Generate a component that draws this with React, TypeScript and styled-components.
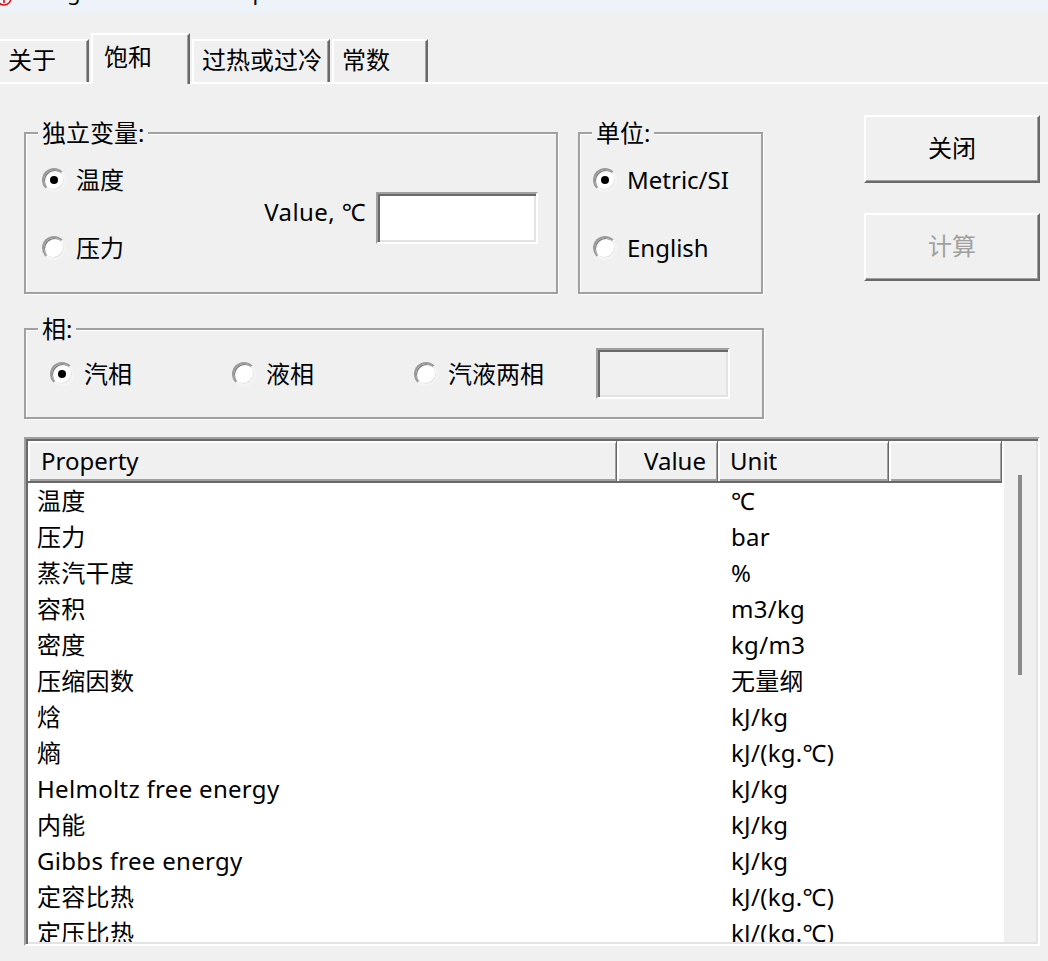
import React from "react";
import styled, { createGlobalStyle } from "styled-components";

const Global = createGlobalStyle`
  html, body { margin: 0; padding: 0; background: #f0f0f0; }
  body {
    font-family: "Noto Sans", "Noto Sans CJK SC", sans-serif;
    font-size: 24px;
    color: #000;
  }
  * { box-sizing: border-box; }
`;

const Window = styled.div`
  width: 1048px;
  height: 961px;
  overflow: hidden;
  background: #f0f0f0;
  display: flex;
  flex-direction: column;
`;

const TitleBar = styled.div`
  height: 14px;
  flex: none;
  background: #eef2f9;
  overflow: hidden;
  display: flex;
  align-items: flex-start;
  gap: 8px;
`;

const TitleIcon = styled.svg`
  flex: none;
  margin-top: -11px;
  margin-left: -5px;
`;

const TitleText = styled.span`
  font-size: 22px;
  line-height: 22px;
  margin-top: -20px;
  white-space: nowrap;
`;

const TabStrip = styled.div`
  height: 70px;
  flex: none;
  display: flex;
  align-items: flex-end;
  gap: 2px;
  margin-left: -2px;
  border-bottom: 2px solid #fff;
`;

const Tab = styled.div<{ $w: number; $active?: boolean }>`
  width: ${(p) => p.$w}px;
  height: ${(p) => (p.$active ? 51 : 43)}px;
  margin-bottom: ${(p) => (p.$active ? -2 : 0)}px;
  padding-left: ${(p) => (p.$active ? 11 : 8)}px;
  padding-bottom: ${(p) => (p.$active ? 5 : 3)}px;
  display: flex;
  align-items: center;
  background: #f0f0f0;
  border-top: 2px solid #fff;
  border-left: 2px solid #fff;
  border-right: 2px solid #696969;
  box-shadow: inset -1px 0 0 #a0a0a0;
  white-space: nowrap;
  line-height: 1;
`;

const Panel = styled.div`
  flex: 1;
  padding: 31px 0 0 24px;
  display: flex;
  flex-direction: column;
`;

const TopRow = styled.div`
  display: flex;
  align-items: flex-start;
`;

const GroupsRow = styled.div`
  margin-top: 17px;
  display: flex;
  gap: 20px;
`;

const GroupBox = styled.div<{ $w: number; $h: number; $pl: number }>`
  position: relative;
  width: ${(p) => p.$w}px;
  height: ${(p) => p.$h}px;
  border: 2px solid #a0a0a0;
  box-shadow: inset 1px 1px 0 #fff, 1px 1px 0 #fff;
  padding-left: ${(p) => p.$pl}px;
  display: flex;
  align-items: center;
`;

const Legend = styled.span`
  position: absolute;
  top: -15px;
  left: 12px;
  padding: 0 4px;
  line-height: 28px;
  background: #f0f0f0;
  white-space: nowrap;
`;

const IndependentBody = styled.div`
  flex: 1;
  display: flex;
  align-items: center;
  justify-content: space-between;
  padding-right: 18px;
`;

const RadioColumn = styled.div`
  display: flex;
  flex-direction: column;
  gap: 36px;
  margin-top: 2px;
`;

const RadioItem = styled.label`
  display: flex;
  align-items: center;
  gap: 10px;
  height: 32px;
  line-height: 32px;
  white-space: nowrap;
  cursor: default;
`;

const RadioCircle = styled.span<{ $on?: boolean }>`
  width: 24px;
  height: 24px;
  flex: none;
  border-radius: 50%;
  background: #fff;
  border: 2px solid;
  border-color: #9a9a9a #f4f4f4 #f4f4f4 #9a9a9a;
  box-shadow: inset 1px 1px 0 #7a7a7a, inset -1px -1px 0 #e3e3e3;
  display: flex;
  align-items: center;
  justify-content: center;
  &::after {
    content: "";
    width: 8px;
    height: 8px;
    border-radius: 50%;
    background: ${(p) => (p.$on ? "#000" : "transparent")};
  }
`;

const ValueRow = styled.div`
  display: flex;
  align-items: center;
  gap: 10px;
  margin-top: 9px;
`;

const ValueLabel = styled.span`
  margin-bottom: 12px;
  white-space: nowrap;
  letter-spacing: 0.4px;
`;

const SunkenInput = styled.div<{ $w: number; $h: number; $bg: string }>`
  width: ${(p) => p.$w}px;
  height: ${(p) => p.$h}px;
  background: ${(p) => p.$bg};
  border: 2px solid;
  border-color: #a0a0a0 #fff #fff #a0a0a0;
  box-shadow: inset 2px 2px 0 #696969, inset -2px -2px 0 #e3e3e3;
`;

const ButtonColumn = styled.div`
  margin-left: 101px;
  display: flex;
  flex-direction: column;
  gap: 30px;
`;

const Button = styled.button<{ $disabled?: boolean }>`
  width: 176px;
  height: 68px;
  padding: 0 0 6px;
  font: inherit;
  color: ${(p) => (p.$disabled ? "#a0a0a0" : "#000")};
  background: #f0f0f0;
  border: 2px solid;
  border-color: #fff #696969 #696969 #fff;
  box-shadow: inset -1px -1px 0 #a0a0a0;
  display: flex;
  align-items: center;
  justify-content: center;
`;

const PhaseBox = styled(GroupBox)`
  margin-top: 34px;
`;

const PhaseGrid = styled.div`
  display: grid;
  grid-template-columns: 182px 182px 182px auto;
  align-items: center;
`;

const Table = styled.div`
  margin-top: 18px;
  width: 1016px;
  height: 509px;
  flex: none;
  border: 2px solid;
  border-color: #a0a0a0 #fff #fff #a0a0a0;
  box-shadow: inset 2px 2px 0 #696969, inset -2px -2px 0 #e3e3e3;
  padding: 2px;
  display: flex;
`;

const ListArea = styled.div`
  flex: 1;
  background: #fff;
  overflow: hidden;
  display: flex;
  flex-direction: column;
`;

const HeaderRow = styled.div`
  flex: none;
  height: 42px;
  display: grid;
  grid-template-columns: 589px 101px 171px 113px;
`;

const HeaderCell = styled.div<{ $right?: boolean; $pl: number }>`
  background: #f0f0f0;
  border-right: 1px solid #696969;
  border-bottom: 2px solid #696969;
  box-shadow: inset 2px 2px 0 #fff, inset -1px -2px 0 #a0a0a0;
  padding: 0 ${(p) => (p.$right ? 11 : 0)}px 0 ${(p) => p.$pl}px;
  display: flex;
  align-items: center;
  justify-content: ${(p) => (p.$right ? "flex-end" : "flex-start")};
  white-space: nowrap;
  line-height: 1;
`;

const DataRow = styled.div`
  flex: none;
  height: 36px;
  display: grid;
  grid-template-columns: 589px 101px 1fr;
  align-items: center;
  white-space: nowrap;
`;

const DataCell = styled.span<{ $pl: number }>`
  padding-left: ${(p) => p.$pl}px;
  line-height: 36px;
  letter-spacing: 0.3px;
`;

const ScrollTrack = styled.div`
  width: 32px;
  flex: none;
  background: #f0f0f0;
  padding: 34px 0 0 14px;
`;

const ScrollThumb = styled.div`
  width: 4px;
  height: 200px;
  background: #8a8a8a;
`;

const rows: [string, string][] = [
  ["温度", "℃"],
  ["压力", "bar"],
  ["蒸汽干度", "%"],
  ["容积", "m3/kg"],
  ["密度", "kg/m3"],
  ["压缩因数", "无量纲"],
  ["焓", "kJ/kg"],
  ["熵", "kJ/(kg.℃)"],
  ["Helmoltz free energy", "kJ/kg"],
  ["内能", "kJ/kg"],
  ["Gibbs free energy", "kJ/kg"],
  ["定容比热", "kJ/(kg.℃)"],
  ["定压比热", "kJ/(kg.℃)"],
];

const Radio: React.FC<{ on?: boolean; label: string }> = ({ on, label }) => (
  <RadioItem>
    <RadioCircle $on={on} />
    <span>{label}</span>
  </RadioItem>
);

export default function App() {
  return (
    <>
      <Global />
      <Window>
        <TitleBar>
          <TitleIcon width="18" height="18" viewBox="0 0 18 18">
            <circle cx="9" cy="9" r="7" fill="none" stroke="#e01010" strokeWidth="1.6" />
            <rect x="8.2" y="10" width="1.6" height="4" fill="#e01010" />
          </TitleIcon>
          <TitleText>Using Steam Table Properties</TitleText>
        </TitleBar>
        <TabStrip>
          <Tab $w={91}>关于</Tab>
          <Tab $w={99} $active>饱和</Tab>
          <Tab $w={138}>过热或过冷</Tab>
          <Tab $w={96}>常数</Tab>
        </TabStrip>
        <Panel>
          <TopRow>
            <GroupsRow>
              <GroupBox $w={534} $h={162} $pl={16}>
                <Legend>独立变量:</Legend>
                <IndependentBody>
                  <RadioColumn>
                    <Radio on label="温度" />
                    <Radio label="压力" />
                  </RadioColumn>
                  <ValueRow>
                    <ValueLabel>Value, ℃</ValueLabel>
                    <SunkenInput $w={162} $h={52} $bg="#fff" />
                  </ValueRow>
                </IndependentBody>
              </GroupBox>
              <GroupBox $w={185} $h={162} $pl={13}>
                <Legend>单位:</Legend>
                <RadioColumn>
                  <Radio on label="Metric/SI" />
                  <Radio label="English" />
                </RadioColumn>
              </GroupBox>
            </GroupsRow>
            <ButtonColumn>
              <Button>关闭</Button>
              <Button $disabled>计算</Button>
            </ButtonColumn>
          </TopRow>
          <PhaseBox $w={740} $h={91} $pl={24}>
            <Legend>相:</Legend>
            <PhaseGrid>
              <Radio on label="汽相" />
              <Radio label="液相" />
              <Radio label="汽液两相" />
              <SunkenInput $w={134} $h={51} $bg="#f0f0f0" />
            </PhaseGrid>
          </PhaseBox>
          <Table>
            <ListArea>
              <HeaderRow>
                <HeaderCell $pl={13}>Property</HeaderCell>
                <HeaderCell $pl={0} $right>Value</HeaderCell>
                <HeaderCell $pl={12}>Unit</HeaderCell>
                <HeaderCell $pl={0} />
              </HeaderRow>
              {rows.map(([name, unit]) => (
                <DataRow key={name}>
                  <DataCell $pl={9}>{name}</DataCell>
                  <DataCell $pl={0} />
                  <DataCell $pl={13}>{unit}</DataCell>
                </DataRow>
              ))}
            </ListArea>
            <ScrollTrack>
              <ScrollThumb />
            </ScrollTrack>
          </Table>
        </Panel>
      </Window>
    </>
  );
}
